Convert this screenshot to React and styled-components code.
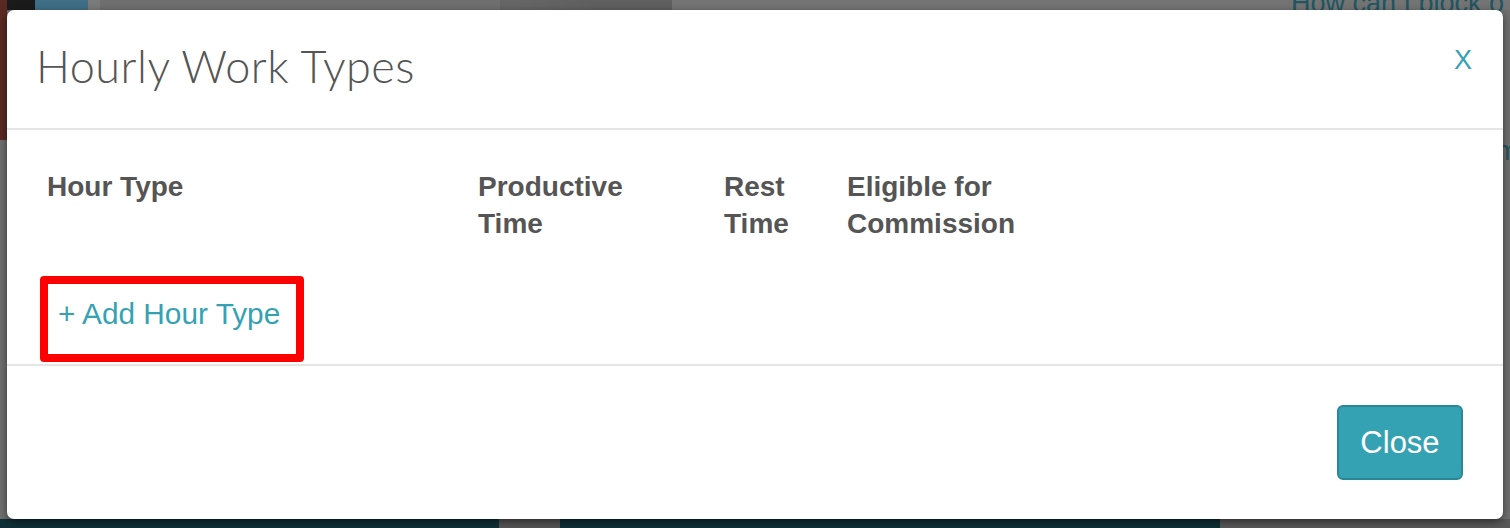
import React from 'react';
import styled, { createGlobalStyle } from 'styled-components';

const GlobalStyle = createGlobalStyle`
  html, body {
    margin: 0;
    padding: 0;
    background: #6f6f6f;
  }
  * { box-sizing: border-box; }
`;

// dimmed page behind the modal
const Backdrop = styled.div`
  position: relative;
  width: 1510px;
  height: 528px;
  overflow: hidden;
  background:
    linear-gradient(90deg, #0f3038 0 499px, #555 499px 560px, #0f3038 560px 1220px, #5a5a5a 1220px) bottom / 100% 9px no-repeat,
    linear-gradient(180deg, #5a2a22 0 140px, transparent 140px) left top / 7px 100% no-repeat,
    linear-gradient(90deg, #1b1b1b 0 35px, #3f6f86 35px 88px, #7a7a7a 88px 100px, #6f6f6f 100px 500px, #666 500px 510px, #5f5f5f 598px 672px, #747474 672px) top / 100% 10px no-repeat,
    #6f6f6f;
`;

const PeekText = styled.div`
  position: absolute;
  left: 1291px;
  top: -12px;
  font-family: "Liberation Sans", Arial, sans-serif;
  font-size: 27px;
  color: #1e5662;
  white-space: nowrap;
`;

const PeekSide = styled.div`
  position: absolute;
  left: 1496px;
  top: 96px;
  font-family: "Liberation Sans", Arial, sans-serif;
  font-size: 27px;
  line-height: 37px;
  color: #1e5662;
`;

const Modal = styled.div`
  position: absolute;
  left: 7px;
  top: 10px;
  width: 1496px;
  height: 509px;
  background: #fff;
  border-radius: 7px;
  box-shadow: 0 3px 9px rgba(0, 0, 0, 0.5);
  display: flex;
  flex-direction: column;
  overflow: hidden;
`;

const Header = styled.div`
  height: 120px;
  padding: 0 31px;
  border-bottom: 2px solid #e5e5e5;
  display: flex;
  align-items: center;
  justify-content: space-between;
`;

const Title = styled.h2`
  margin: 0 0 6px -2px;
  font-family: Lato, "Open Sans", sans-serif;
  font-weight: 300;
  font-size: 45px;
  color: #555;
  letter-spacing: 0.5px;
`;

const CloseX = styled.span`
  font-family: "Liberation Sans", Arial, sans-serif;
  font-size: 27px;
  color: #35a2b4;
  margin: 0 0 18px;
  cursor: pointer;
`;

const Body = styled.div`
  height: 236px;
  padding: 29px 30px 0;
  border-bottom: 2px solid #e5e5e5;
`;

const Table = styled.div`
  display: grid;
  grid-template-columns: 431px 246px 123px 1fr;
`;

const HeadCell = styled.div`
  padding: 9px 10px 34px;
  font-family: "Liberation Sans", Arial, sans-serif;
  font-weight: bold;
  font-size: 28px;
  line-height: 37px;
  color: #555;
`;

const Highlight = styled.div`
  display: inline-block;
  margin-left: 3px;
  border: 8px solid #ff0000;
  border-radius: 4px;
  padding: 13px 16px 23px 10px;
`;

const AddLink = styled.a`
  font-family: "Liberation Sans", Arial, sans-serif;
  font-size: 29.8px;
  color: #35a2b4;
  text-decoration: none;
  cursor: pointer;
`;

const Footer = styled.div`
  flex: 1;
  padding: 0 40px;
  display: flex;
  align-items: center;
  justify-content: flex-end;
`;

const Button = styled.button`
  width: 126px;
  height: 75px;
  background: #35a2b4;
  border: 2px solid #2a8797;
  border-radius: 6px;
  color: #fff;
  font-family: "Liberation Sans", Arial, sans-serif;
  font-size: 31px;
  cursor: pointer;
`;

const columns = [
  ['Hour Type'],
  ['Productive', 'Time'],
  ['Rest', 'Time'],
  ['Eligible for', 'Commission'],
];

export default function App() {
  return (
    <>
      <GlobalStyle />
      <Backdrop>
        <PeekText>How can I block o</PeekText>
        <PeekSide>l<br />m</PeekSide>
        <Modal>
          <Header>
            <Title>Hourly Work Types</Title>
            <CloseX>X</CloseX>
          </Header>
          <Body>
            <Table>
              {columns.map((lines, i) => (
                <HeadCell key={i}>
                  {lines.map((l, j) => (
                    <div key={j}>{l}</div>
                  ))}
                </HeadCell>
              ))}
            </Table>
            <Highlight>
              <AddLink>+ Add Hour Type</AddLink>
            </Highlight>
          </Body>
          <Footer>
            <Button>Close</Button>
          </Footer>
        </Modal>
      </Backdrop>
    </>
  );
}
